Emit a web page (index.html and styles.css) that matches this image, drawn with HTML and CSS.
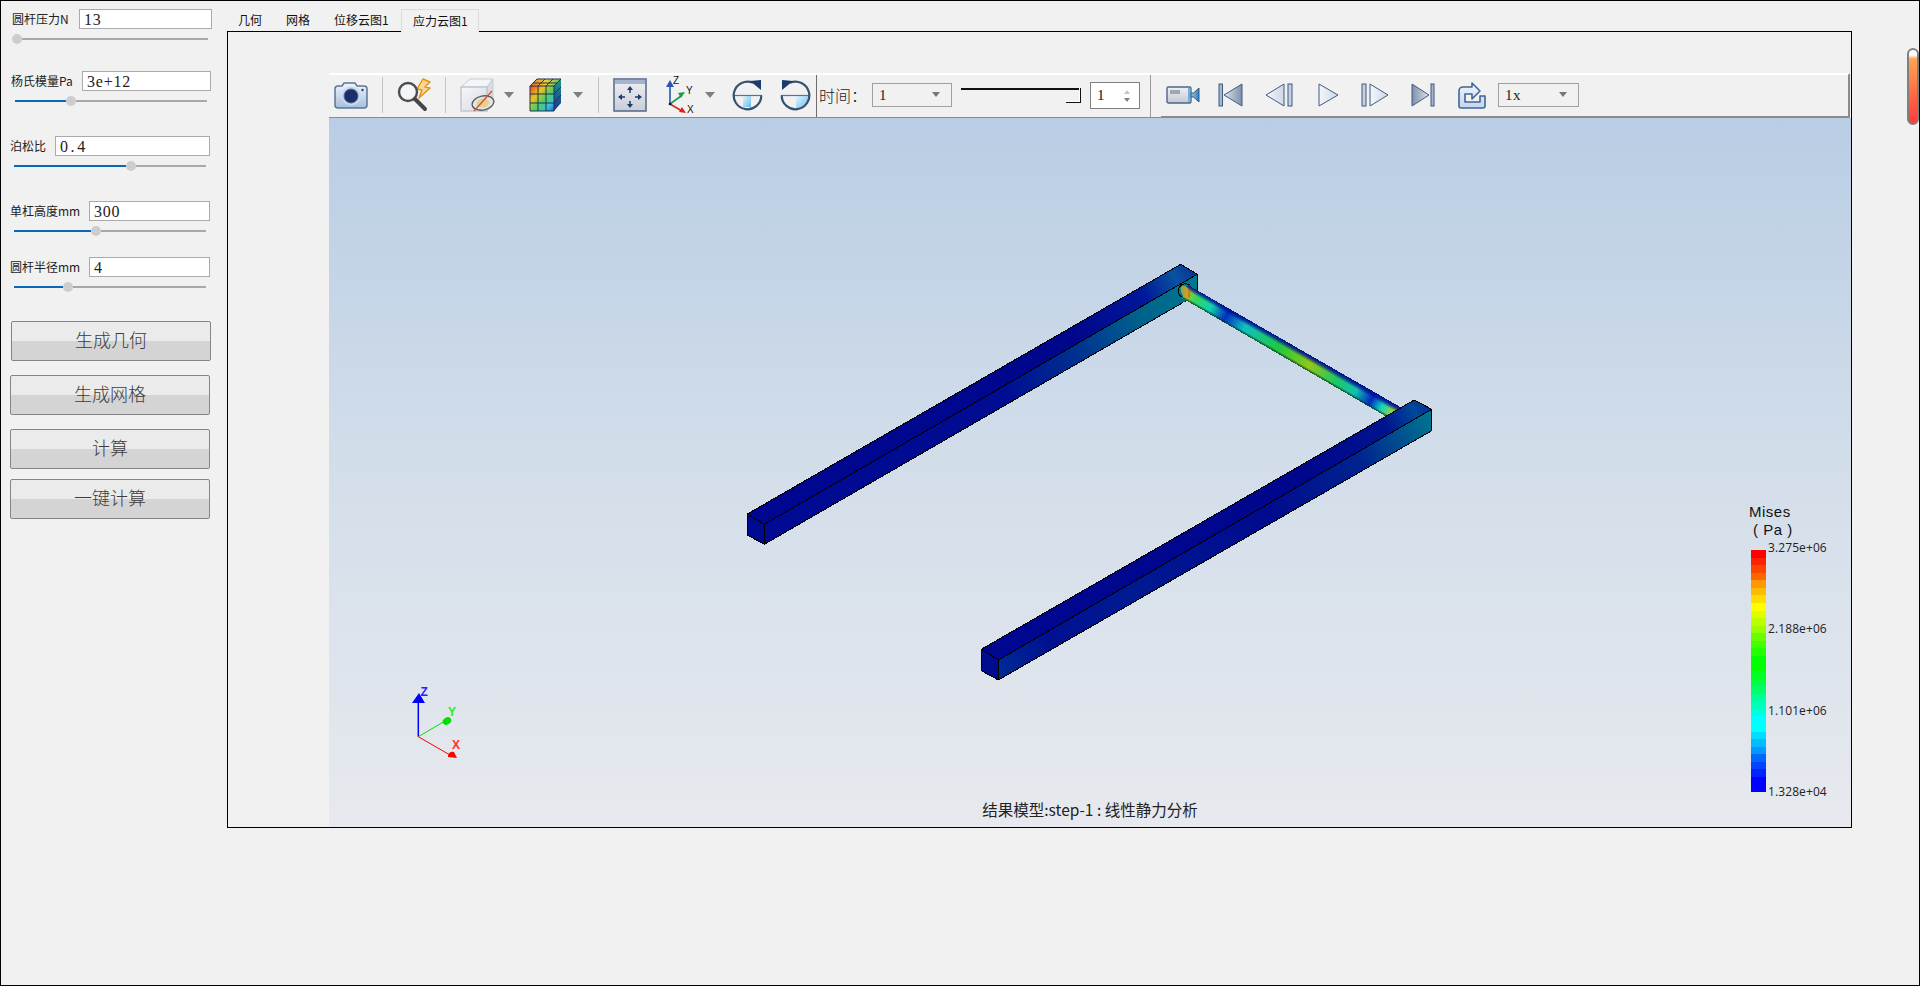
FILE: index.html
```html
<!DOCTYPE html>
<html lang="zh">
<head>
<meta charset="utf-8">
<title>应力云图</title>
<link rel="stylesheet" href="styles.css">
</head>
<body>
<svg class="defs" width="0" height="0" aria-hidden="true">
  <defs>
    <linearGradient id="gBlue" x1="0" y1="0" x2="0" y2="1"><stop offset="0" stop-color="#f1f5fb"/><stop offset="1" stop-color="#a6bedc"/></linearGradient>
    <linearGradient id="gGray" x1="0" y1="0" x2="0" y2="1"><stop offset="0" stop-color="#f0f1f4"/><stop offset="1" stop-color="#c2c7d3"/></linearGradient>
    <linearGradient id="gFit" x1="0" y1="0" x2="0" y2="1"><stop offset="0" stop-color="#f0f1f4"/><stop offset="1" stop-color="#c9cdd8"/></linearGradient>
    <linearGradient id="gTri" x1="0" y1="0" x2="1" y2="0"><stop offset="0" stop-color="#f4f6fa"/><stop offset="1" stop-color="#cfd8e6"/></linearGradient>
    <linearGradient id="gTriDark" x1="0" y1="0" x2="1" y2="0"><stop offset="0" stop-color="#7c8fa9"/><stop offset="1" stop-color="#dfe4ec"/></linearGradient>
    <linearGradient id="gTriDarkR" x1="1" y1="0" x2="0" y2="0"><stop offset="0" stop-color="#7c8fa9"/><stop offset="1" stop-color="#dfe4ec"/></linearGradient>
    <linearGradient id="gCube" x1="0" y1="0" x2="1" y2="1"><stop offset="0" stop-color="#f6f7f9"/><stop offset="1" stop-color="#d5d9e0"/></linearGradient>
    <linearGradient id="gRubikFront" x1="0" y1="0" x2="1" y2="1"><stop offset="0" stop-color="#e0462a"/><stop offset=".3" stop-color="#f0c020"/><stop offset=".55" stop-color="#50d060"/><stop offset=".8" stop-color="#30c0e0"/><stop offset="1" stop-color="#2060d0"/></linearGradient>
    <linearGradient id="gRubikTop" x1="0" y1="0" x2="1" y2="0"><stop offset="0" stop-color="#e87030"/><stop offset=".5" stop-color="#e8d040"/><stop offset="1" stop-color="#60c070"/></linearGradient>
    <linearGradient id="gRubikSide" x1="0" y1="0" x2="0" y2="1"><stop offset="0" stop-color="#1f9a8a"/><stop offset="1" stop-color="#14319a"/></linearGradient>
    <linearGradient id="gQuarter" x1="0" y1="0" x2="1" y2="1"><stop offset="0" stop-color="#e4f3fc"/><stop offset="1" stop-color="#62bdee"/></linearGradient>
    <linearGradient id="gLens" x1="0" y1="0" x2="1" y2="0"><stop offset="0" stop-color="#8fc8f0"/><stop offset="1" stop-color="#2f7fc0"/></linearGradient>
    <linearGradient id="gExport" x1="0" y1="0" x2="0" y2="1"><stop offset="0" stop-color="#f1f5fb"/><stop offset="1" stop-color="#c4d5ea"/></linearGradient>

    <linearGradient id="b1Top" gradientUnits="userSpaceOnUse" x1="747" y1="514" x2="1197" y2="264"><stop offset="0" stop-color="#000690"/><stop offset=".72" stop-color="#00068c"/><stop offset=".88" stop-color="#00189a"/><stop offset=".95" stop-color="#0a52a0"/><stop offset="1" stop-color="#002a94"/></linearGradient>
    <linearGradient id="b1Side" gradientUnits="userSpaceOnUse" x1="764" y1="530" x2="1197" y2="285"><stop offset="0" stop-color="#000a94"/><stop offset=".55" stop-color="#000c92"/><stop offset=".72" stop-color="#003090"/><stop offset=".86" stop-color="#00608c"/><stop offset="1" stop-color="#00788e"/></linearGradient>
    <linearGradient id="b2Top" gradientUnits="userSpaceOnUse" x1="981" y1="650" x2="1431" y2="400"><stop offset="0" stop-color="#000690"/><stop offset=".72" stop-color="#00068c"/><stop offset=".9" stop-color="#00148f"/><stop offset=".96" stop-color="#00489a"/><stop offset="1" stop-color="#002a94"/></linearGradient>
    <linearGradient id="b2Side" gradientUnits="userSpaceOnUse" x1="998" y1="670" x2="1431" y2="420"><stop offset="0" stop-color="#002a96"/><stop offset=".12" stop-color="#001090"/><stop offset=".3" stop-color="#001a92"/><stop offset=".62" stop-color="#000a8e"/><stop offset=".84" stop-color="#00248f"/><stop offset="1" stop-color="#007490"/></linearGradient>
    <linearGradient id="rodAlong" gradientUnits="userSpaceOnUse" x1="1185" y1="290" x2="1395" y2="412"><stop offset="0" stop-color="#c0c820"/><stop offset=".06" stop-color="#30d860"/><stop offset=".13" stop-color="#10d0b0"/><stop offset=".2" stop-color="#0030c0"/><stop offset=".29" stop-color="#10c0c0"/><stop offset=".45" stop-color="#20c840"/><stop offset=".6" stop-color="#90c818"/><stop offset=".72" stop-color="#20c860"/><stop offset=".82" stop-color="#10c0b0"/><stop offset=".89" stop-color="#0028c0"/><stop offset=".94" stop-color="#10d0c0"/><stop offset="1" stop-color="#a8d820"/></linearGradient>
    <linearGradient id="rodAcross" gradientUnits="userSpaceOnUse" x1="1290" y1="343.600" x2="1282.800" y2="356"><stop offset="0" stop-color="#000c90" stop-opacity="1"/><stop offset=".18" stop-color="#000c90" stop-opacity=".75"/><stop offset=".42" stop-color="#000c90" stop-opacity="0"/><stop offset=".84" stop-color="#004020" stop-opacity="0"/><stop offset="1" stop-color="#004020" stop-opacity=".75"/></linearGradient>
    <linearGradient id="capGrad" x1="0" y1="0" x2="1" y2="1"><stop offset="0" stop-color="#50b060"/><stop offset=".6" stop-color="#d8a020"/><stop offset="1" stop-color="#c04010"/></linearGradient>
  </defs>
</svg>

<div class="window">
  <aside class="sidebar">
    <div class="field field-a">
      <div class="field-head"><span class="field-label label-a">圆杆压力N</span><div class="field-input">13</div></div>
      <div class="slider slider-a"><span class="slider-knob"></span><span class="slider-rest"></span></div>
    </div>
    <div class="field field-b">
      <div class="field-head"><span class="field-label label-b">杨氏模量Pa</span><div class="field-input">3e+12</div></div>
      <div class="slider"><span class="slider-fill" style="width:51px"></span><span class="slider-knob"></span><span class="slider-rest"></span></div>
    </div>
    <div class="field field-c">
      <div class="field-head"><span class="field-label label-c">泊松比</span><div class="field-input input-wide">0.4</div></div>
      <div class="slider"><span class="slider-fill" style="width:112px"></span><span class="slider-knob"></span><span class="slider-rest"></span></div>
    </div>
    <div class="field field-c">
      <div class="field-head"><span class="field-label label-d">单杠高度mm</span><div class="field-input">300</div></div>
      <div class="slider"><span class="slider-fill" style="width:77px"></span><span class="slider-knob"></span><span class="slider-rest"></span></div>
    </div>
    <div class="field field-c field-tight">
      <div class="field-head"><span class="field-label label-d">圆杆半径mm</span><div class="field-input">4</div></div>
      <div class="slider"><span class="slider-fill" style="width:49px"></span><span class="slider-knob"></span><span class="slider-rest"></span></div>
    </div>
    <div class="actions">
      <button class="action action-first">生成几何</button>
      <button class="action">生成网格</button>
      <button class="action">计算</button>
      <button class="action action-last">一键计算</button>
    </div>
  </aside>

  <main class="main">
    <nav class="tabs">
      <span class="tab">几何</span>
      <span class="tab">网格</span>
      <span class="tab tab-wide">位移云图1</span>
      <span class="tab tab-wide tab-active">应力云图1</span>
    </nav>
    <section class="frame">
      <div class="viewer">
        <div class="toolbar">
          <svg class="ic ic-camera" viewBox="0 0 34 28"><path d="M8 5l2-3h11l2 3h7a3 3 0 0 1 3 3v16a3 3 0 0 1-3 3H4a3 3 0 0 1-3-3V8a3 3 0 0 1 3-3z" fill="url(#gBlue)" stroke="#5b7698" stroke-width="1.5"/><circle cx="17" cy="15" r="9.5" fill="#c9daf0"/><circle cx="17" cy="15" r="7" fill="#1b2e68" stroke="#4e6b96"/><circle cx="28.5" cy="9" r="1.2" fill="#28406e"/></svg>
          <span class="sep sep-1"></span>
          <svg class="ic ic-search" viewBox="0 0 35 34"><path d="M26 1l7 3-5 5 5 1-11 10 3-8-5-1z" fill="#fbd890" stroke="#e8900f" stroke-width="1.4" stroke-linejoin="round"/><circle cx="11" cy="14" r="9" fill="#f4f5f6" stroke="#4c4f52" stroke-width="2.4"/><path d="M18 21l10 10" stroke="#44474a" stroke-width="4" stroke-linecap="round"/></svg>
          <span class="sep sep-2"></span>
          <svg class="ic ic-cube" viewBox="0 0 35 34"><path d="M1 9l9-8h23l-6 8z" fill="#f4f5f8" stroke="#c8ccd4"/><path d="M27 9l6-8v24l-6 8z" fill="#d8dbe2" stroke="#c8ccd4"/><rect x="1" y="9" width="26" height="24" fill="url(#gCube)" stroke="#bfc4ce" stroke-width="1.4"/><ellipse cx="23" cy="25" rx="11" ry="7" transform="rotate(-12 23 25)" fill="#e2e4e4" stroke="#55595e" stroke-width="1.3"/><ellipse cx="23" cy="25" rx="6.5" ry="4.5" transform="rotate(-12 23 25)" fill="#e8cf90"/><path d="M14 33L32 13" stroke="#d0572f" stroke-width="1.4"/></svg>
          <span class="drop drop-1"></span>
          <svg class="ic ic-rubik" viewBox="0 0 33 34"><rect x="1" y="8" width="24" height="25" fill="url(#gRubikFront)"/><path d="M1 8l7-7h24l-7 7z" fill="url(#gRubikTop)"/><path d="M25 8l7-7v24l-7 8z" fill="url(#gRubikSide)"/><path d="M1 8h24v25H1zM9 8v25M17 8v25M1 16h24M1 25h24M25 8l7-7H8L1 8M9 8l7-7M17 8l7-7M4 5h24M25 16l7-7M25 25l7-8" fill="none" stroke="#27304a" stroke-width="1"/></svg>
          <span class="drop drop-2"></span>
          <span class="sep sep-3"></span>
          <svg class="ic ic-fit" viewBox="0 0 34 34"><rect x="1" y="1" width="32" height="32" fill="url(#gFit)" stroke="#5c6f8c" stroke-width="1.600"/><rect x="2" y="2" width="30" height="4" fill="#a4b4cc"/><path d="M17 10v5M17 28v-5M7 19h5M27 19h-5" stroke="#1c3a6c" stroke-width="1.500"/><path d="M17 8l-3 4h6zM17 30l-3-4h6zM5 19l4-3v6zM29 19l-4-3v6z" fill="#1c3a6c"/></svg>
          <svg class="ic ic-axes" viewBox="0 0 30 38"><path d="M5 28V9" stroke="#2b55b0" stroke-width="1.6"/><path d="M5 4l-4 7h8z" fill="#2b55b0"/><path d="M5 28l11-8" stroke="#1a9a50" stroke-width="1.6"/><path d="M20 16l-7 1 3 5z" fill="#1a9a50"/><path d="M5 28l12 7" stroke="#e02020" stroke-width="1.6"/><path d="M21 37l-7-1 3-5z" fill="#e02020"/><circle cx="5" cy="28" r="1.300" fill="#111"/><text class="axis-mini" x="8" y="8">Z</text><text class="axis-mini" x="21" y="18">Y</text><text class="axis-mini" x="22" y="37">X</text></svg>
          <span class="drop drop-3"></span>
          <svg class="ic ic-rot1" viewBox="0 0 31 31"><path d="M11 16h8v11h-8z" fill="url(#gQuarter)"/><path d="M1 15.500h29" stroke="#2f7fc2" stroke-width="1.200"/><path d="M21 2.800A13.800 13.800 0 1 0 29.300 15.500" fill="none" stroke="#37526f" stroke-width="2.200"/><path d="M18 1l11-1 0 10z" fill="#1d3a6c"/></svg>
          <svg class="ic ic-rot2" viewBox="0 0 31 31"><path d="M16 16h13a13.800 13.800 0 0 1-13 13z" fill="url(#gQuarter)"/><path d="M1 15.500h29" stroke="#2f7fc2" stroke-width="1.200"/><path d="M10 2.800A13.800 13.800 0 1 1 1.700 15.500" fill="none" stroke="#37526f" stroke-width="2.200"/><path d="M13 1L2 0l0 10z" fill="#1d3a6c"/></svg>
          <span class="sep-dark"></span>
          <span class="time-label">时间：</span>
          <div class="combo combo-time"><span>1</span><i class="combo-arrow"></i></div>
          <div class="time-slider"><span class="time-handle"></span></div>
          <div class="spin"><span>1</span><i class="spin-up"></i><i class="spin-down"></i></div>
          <span class="sep-mid"></span>
          <div class="player">
            <svg class="ic ic-video" viewBox="0 0 34 20"><rect x="1" y="2" width="24" height="16" rx="1.500" fill="url(#gGray)" stroke="#4d6484" stroke-width="1.400"/><rect x="4" y="5" width="10" height="4" fill="#9da6b2"/><rect x="22" y="3" width="2.400" height="14" fill="#6fb0e0"/><path d="M25 8h2.500L33 3v14l-5.500-5H25z" fill="url(#gLens)" stroke="#3c5878"/></svg>
            <svg class="ic ic-start" viewBox="0 0 25 24"><rect x="1" y="1" width="3.500" height="22" fill="#a7b6ca" stroke="#3f5b82"/><path d="M24 1v22L6 12z" fill="url(#gTriDarkR)" stroke="#3f5b82"/></svg>
            <svg class="ic ic-prev" viewBox="0 0 28 24"><path d="M19 1v22L1 12z" fill="url(#gTri)" stroke="#3f5b82"/><rect x="23" y="1" width="4" height="22" fill="#c6d0de" stroke="#3f5b82"/></svg>
            <svg class="ic ic-play" viewBox="0 0 21 24"><path d="M1 1v22l19-11z" fill="url(#gTri)" stroke="#3f5b82"/></svg>
            <svg class="ic ic-next" viewBox="0 0 28 24"><rect x="1" y="1" width="4" height="22" fill="#c6d0de" stroke="#3f5b82"/><path d="M9 1v22l18-11z" fill="url(#gTri)" stroke="#3f5b82"/></svg>
            <svg class="ic ic-end" viewBox="0 0 24 24"><path d="M1 1v22l17-11z" fill="url(#gTriDark)" stroke="#3f5b82"/><rect x="20" y="1" width="3" height="22" fill="#a7b6ca" stroke="#3f5b82"/></svg>
            <svg class="ic ic-export" viewBox="0 0 29 28"><path d="M2 12v13a2 2 0 0 0 2 2h22a2 2 0 0 0 2-2V15h-5v6H8v-8h7v5l8-8-8-8v4H6a4 4 0 0 0-4 4z" fill="url(#gExport)" stroke="#3d669a" stroke-width="1.600" stroke-linejoin="round"/></svg>
            <div class="combo combo-speed"><span>1x</span><i class="combo-arrow"></i></div>
          </div>
        </div>
        <div class="viewport">
          <svg class="scene" viewBox="329 118 1522 710" width="1522" height="710">
            <g class="solid">
              <polygon points="747.300,514 1180.700,264.300 1197.300,274.300 764.300,524.300" fill="url(#b1Top)"/>
              <polygon points="764.300,524.300 1197.300,274.300 1197.300,294.300 764.300,544.300" fill="url(#b1Side)"/>
              <polygon points="747.300,514 764.300,524.300 764.300,544.300 747.300,535" fill="#000a90"/>
            </g>
            <g class="edges">
              <path d="M747.300 514L1180.700 264.300L1197.300 274.300L1197.300 294.300L1185 301.400M764.300 524.300L1197.300 274.300M747.300 514L764.300 524.300L764.300 544.300L747.300 535Z M764.300 544.300L1183 302.500"/>
              <path d="M1181.500 297A6.500 6 0 0 1 1190 285"/>
            </g>
            <path class="rod-shape" d="M1188 285L1402 408L1387 417L1182 298Z" fill="url(#rodAlong)"/>
            <path class="rod-shape" d="M1188 285L1402 408L1387 417L1182 298Z" fill="url(#rodAcross)"/>
            <ellipse cx="1185.500" cy="292" rx="4" ry="7" fill="url(#capGrad)" transform="rotate(-30 1185.500 292)"/>
            <g class="solid">
              <polygon points="981.300,649.300 1414.300,400 1431.700,409.300 998.300,660" fill="url(#b2Top)"/>
              <polygon points="998.300,660 1431.700,409.300 1431.700,430.700 998.300,680" fill="url(#b2Side)"/>
              <polygon points="981.300,649.300 998.300,660 998.300,680 981.300,670.700" fill="#000c90"/>
            </g>
            <g class="edges">
              <path d="M981.300 649.300L1414.300 400L1431.700 409.300L1431.700 430.700L998.300 680L981.300 670.700L981.300 649.300L998.300 660L998.300 680M998.300 660L1431.700 409.300"/>
            </g>
            <path d="M418.300 736.700V701" stroke="#0000ff" stroke-width="1.500"/>
            <path d="M419 693L425 703H412Z" fill="#0000ff"/>
            <path d="M418.300 736.700L445 721" stroke="#00e000" stroke-width="1"/>
            <ellipse cx="447" cy="721" rx="4.500" ry="3.500" fill="#00e000" transform="rotate(-30 447 721)"/>
            <path d="M418.300 736.700L450 755" stroke="#ff0000" stroke-width="1"/>
            <path d="M448 757a4.500 4.500 0 0 1 6-5l3 6z" fill="#ff0000"/>
            <text class="axis-z" x="420.500" y="696">Z</text>
            <text class="axis-y" x="448" y="716">Y</text>
            <text class="axis-x" x="452" y="749">X</text>
          </svg>
          <div class="legend">
            <div class="legend-title">Mises<br><span class="legend-unit">( Pa )</span></div>
            <div class="legend-body">
              <div class="legend-bar"></div>
              <div class="legend-values"><span>3.275e+06</span><span>2.188e+06</span><span>1.101e+06</span><span>1.328e+04</span></div>
            </div>
          </div>
          <div class="caption">结果模型:step-1 : 线性静力分析</div>
        </div>
      </div>
    </section>
  </main>
  <div class="scrollbar"><span class="scrollbar-thumb"></span></div>
</div>
</body>
</html>
```
FILE: styles.css
```css
* { box-sizing: border-box; }
html, body { margin: 0; padding: 0; }
html { overflow: hidden; }
body { font-family: "Noto Sans CJK SC", "Noto Sans", sans-serif; background: #f1f1f1; }
.defs { position: absolute; }

.window {
  position: relative;
  width: 1920px;
  height: 986px;
  border: 1px solid #000;
  background: #f1f1f1;
  display: flex;
  overflow: hidden;
}

/* ---------- sidebar ---------- */
.sidebar { flex: none; width: 226px; padding-top: 8px; display: flex; flex-direction: column; }
.field-a { margin: 0 0 27px 11px; width: 200px; }
.field-b { margin: 0 0 30px 10px; width: 200px; }
.field-c { margin: 0 0 30px 9px; width: 200px; }
.field-tight { margin-bottom: 29px; }
.field-c:nth-child(4) { margin-bottom: 21px; }
.field-head { display: flex; align-items: center; height: 20px; }
.field-label { flex: none; font-size: 12px; line-height: 20px; color: #222; white-space: nowrap; }
.label-a { width: 67px; }
.label-b { width: 71px; }
.label-c { width: 45px; }
.label-d { width: 79px; }
.field-input {
  flex: 1;
  height: 20px;
  padding-left: 4px;
  border: 1px solid #aaa;
  background: #fff;
  font-family: "Liberation Serif", "Noto Serif", serif;
  font-size: 16px;
  line-height: 19px;
  letter-spacing: .8px;
  color: #222;
}
.input-wide { letter-spacing: 2.6px; }
.slider { display: flex; align-items: center; height: 10px; margin: 5px 4px 0; width: 192px; }
.slider-a { margin-left: 0; width: 196px; }
.slider-fill { flex: none; height: 2px; background: #0b68b8; }
.slider-rest { flex: 1; height: 2px; background: #a8a8a8; }
.slider-knob { flex: none; width: 10px; height: 10px; border-radius: 50%; background: #cdcdcd; }

.actions { display: flex; flex-direction: column; align-items: flex-start; }
.action {
  width: 200px;
  height: 40px;
  margin: 0 0 14px 9px;
  padding: 0 0 4px;
  border: 1px solid #858585;
  border-radius: 2px;
  background: linear-gradient(#ebebeb 0, #ebebeb 50%, #d4d4d4 50%, #d4d4d4 100%);
  font-family: "Noto Sans CJK SC", sans-serif;
  font-weight: 300;
  font-size: 18px;
  line-height: 30px;
  color: #3c3c3c;
}
.action-first { margin-left: 10px; }
.action:nth-child(3) { margin-bottom: 10px; }
.action-last { margin-bottom: 0; }

/* ---------- tabs and frame ---------- */
.main { flex: none; width: 1625px; display: flex; flex-direction: column; }
.tabs { display: flex; height: 30px; padding-top: 8px; margin-left: -1px; position: relative; z-index: 1; }
.tab {
  height: 22px;
  padding: 0 12px;
  font-size: 12px;
  line-height: 22px;
  color: #111;
  white-space: nowrap;
}
.tab-wide { width: 78px; }
.tab-active { border: 1px solid #dcdcdc; border-bottom: 0; background: #f1f1f1; padding: 0 11px; line-height: 21px; height: 23px; margin-bottom: -1px; margin-left: 1px; }
.frame { width: 1625px; height: 797px; border: 1px solid #000; padding: 41px 0 0 101px; background: #f1f1f1; display: flex; }
.viewer { flex: 1; min-width: 0; display: flex; flex-direction: column; }

/* ---------- toolbar ---------- */
.toolbar {
  flex: none;
  height: 45px;
  margin-right: 1px;
  padding-bottom: 2px;
  display: flex;
  align-items: center;
  border-top: 2px solid #fff;
  border-bottom: 1px solid #8a8a8a;
  border-right: 2px solid #8a8a8a;
  background: #f1f1f1;
}
.ic { flex: none; display: block; }
.ic-camera { width: 34px; height: 28px; margin-left: 5px; }
.sep { flex: none; width: 1px; height: 36px; background: #c4c4c4; }
.sep-1 { margin-left: 14px; }
.ic-search { width: 35px; height: 34px; margin-left: 14px; }
.sep-2 { margin-left: 13px; }
.ic-cube { width: 35px; height: 34px; margin-left: 14px; }
.drop { flex: none; width: 0; height: 0; border-style: solid; border-width: 6px 5px 0; border-color: #7f7f7f transparent transparent; }
.drop-1 { margin-left: 9px; }
.ic-rubik { width: 33px; height: 34px; margin-left: 15px; }
.drop-2 { margin-left: 11px; }
.sep-3 { margin-left: 15px; }
.ic-fit { width: 34px; height: 34px; margin-left: 14px; }
.ic-axes { width: 30px; height: 38px; margin-left: 18px; }
.axis-mini { font-family: "Liberation Sans", sans-serif; font-size: 10px; fill: #111; }
.drop-3 { margin-left: 10px; }
.ic-rot1 { width: 31px; height: 31px; margin-left: 17px; }
.ic-rot2 { width: 31px; height: 31px; margin-left: 17px; }
.sep-dark { flex: none; align-self: stretch; width: 1px; margin: 0 0 -2px 5px; background: #6e6e6e; }
.time-label { flex: none; width: 42px; margin-left: 2px; font-size: 16px; font-weight: 300; line-height: 20px; color: #222; white-space: nowrap; }
.combo {
  flex: none;
  position: relative;
  height: 24px;
  border: 1px solid #a0a0a0;
  background: #f1f1f1;
  padding-left: 6px;
  font-family: "Liberation Serif", serif;
  font-size: 15px;
  line-height: 22px;
  color: #222;
}
.combo-time { width: 80px; margin-left: 11px; }
.combo-speed { width: 81px; margin-left: 12px; letter-spacing: .6px; }
.combo-arrow { position: absolute; right: 11px; top: 8px; width: 0; height: 0; border-style: solid; border-width: 5px 4px 0; border-color: #777 transparent transparent; }
.time-slider { flex: none; position: relative; width: 120px; height: 15px; margin: 1px 0 0 9px; border-top: 2px solid #111; }
.time-handle { position: absolute; right: 0; top: -2px; width: 15px; height: 15px; border-right: 1px solid #111; border-bottom: 1px solid #111; box-shadow: inset -1px -1px 0 #fff; }
.spin {
  flex: none;
  position: relative;
  width: 50px;
  height: 27px;
  margin-left: 9px;
  padding-left: 6px;
  border: 1px solid #808080;
  background: #fff;
  font-family: "Liberation Serif", serif;
  font-size: 15px;
  line-height: 25px;
  color: #111;
}
.spin-up, .spin-down { position: absolute; right: 9px; width: 0; height: 0; border-style: solid; border-color: transparent; }
.spin-up { top: 7px; border-width: 0 3px 4px; border-bottom-color: #c4c4c4; }
.spin-down { bottom: 6px; border-width: 4px 3px 0; border-top-color: #808080; }
.sep-mid { flex: none; align-self: stretch; width: 1px; margin: 0 0 -2px 10px; background: #9a9a9a; }
.player { flex: 1; min-width: 0; align-self: stretch; margin: -2px 0 -3px 10px; padding-bottom: 1px; display: flex; align-items: center; border-top: 2px solid #fff; border-bottom: 2px solid #8a8a8a; }
.ic-video { width: 34px; height: 20px; margin-left: 5px; }
.ic-start { width: 25px; height: 24px; margin-left: 18px; }
.ic-prev { width: 28px; height: 24px; margin-left: 22px; }
.ic-play { width: 21px; height: 24px; margin-left: 25px; }
.ic-next { width: 28px; height: 24px; margin-left: 22px; }
.ic-end { width: 24px; height: 24px; margin-left: 22px; }
.ic-export { width: 29px; height: 28px; margin-left: 22px; }

/* ---------- 3D viewport ---------- */
.viewport {
  flex: 1;
  position: relative;
  overflow: hidden;
  background: linear-gradient(#b9cde4 0%, #d3deea 50%, #e7e9ee 100%);
}
.scene { position: absolute; left: 0; top: 0; display: block; }
.solid polygon, .rod-shape { shape-rendering: crispEdges; }
.edges path { fill: none; stroke: #000; stroke-width: 1; shape-rendering: crispEdges; }
.axis-z, .axis-y, .axis-x { font-family: "Liberation Sans", sans-serif; font-size: 12px; font-weight: bold; }
.axis-z { fill: #2222ff; }
.axis-y { fill: #22ee22; }
.axis-x { fill: #ff3030; }

.legend { position: absolute; left: 1420px; top: 385px; }
.legend-title { font-family: "Liberation Sans", sans-serif; font-size: 15px; line-height: 18px; letter-spacing: .5px; color: #111; }
.legend-unit { margin-left: 4px; white-space: pre; }
.legend-body { display: flex; align-items: flex-start; margin-top: 1px; }
.legend-bar {
  flex: none;
  width: 15px;
  height: 242px;
  margin: 10px 2px 0 2px;
  background: linear-gradient(
    #f00 0 3.2%, #f20 3.2% 6.4%, #f40 6.4% 9.4%, #f60 9.4% 12.5%, #f90 12.5% 15.6%, #fb0 15.6% 18.8%, #fd0 18.8% 21.9%, #ff0 21.9% 25%,
    #df0 25% 28.1%, #bf0 28.1% 31.2%, #9f0 31.2% 34.4%, #6f0 34.4% 37.5%, #4f0 37.5% 40.6%, #2f0 40.6% 43.8%, #0f0 43.8% 50%,
    #0f2 50% 53.1%, #0f4 53.1% 56.2%, #0f6 56.2% 59.4%, #0f9 59.4% 62.5%, #0fb 62.5% 65.6%, #0fd 65.6% 68.8%, #0ff 68.8% 75%,
    #0df 75% 78.1%, #0bf 78.1% 81.2%, #09f 81.2% 84.4%, #06f 84.4% 87.5%, #04f 87.5% 90.6%, #02f 90.6% 93.8%, #00f 93.8% 100%
  );
}
.legend-values {
  display: flex;
  flex-direction: column;
  justify-content: space-between;
  height: 260px;
  font-family: "Open Sans", sans-serif;
  font-size: 12px;
  line-height: 16px;
  letter-spacing: .1px;
  color: #222;
  white-space: nowrap;
}
.caption {
  position: absolute;
  left: 0;
  right: 0;
  bottom: 8px;
  text-align: center;
  font-size: 15.5px;
  line-height: 20px;
  color: #222;
}

/* ---------- window scrollbar ---------- */
.scrollbar { position: absolute; right: 0; top: 47px; width: 12px; height: 77px; }
.scrollbar-thumb {
  display: block;
  width: 100%;
  height: 100%;
  border: 2.5px solid #808080;
  border-right-width: 2px;
  border-radius: 6px;
  background: linear-gradient(#fff 0 7%, #ffa454 12%, #ff3b3b 100%);
}
```
